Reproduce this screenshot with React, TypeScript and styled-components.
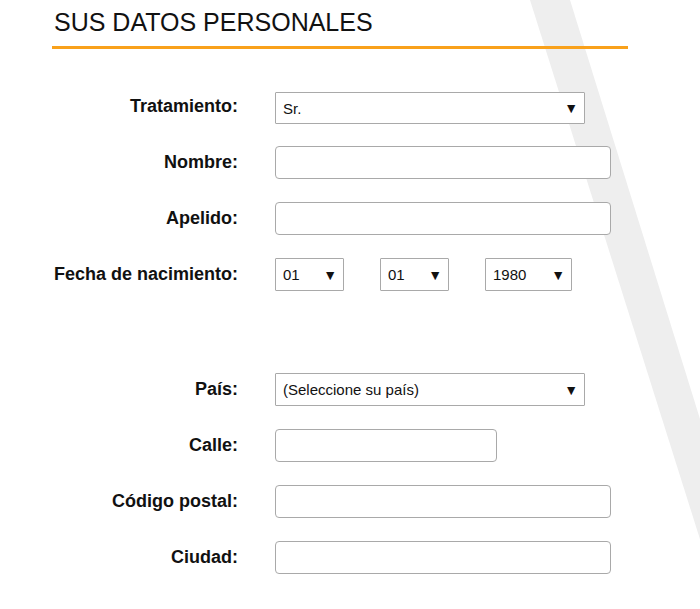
import styled, { createGlobalStyle } from "styled-components";

const GlobalStyle = createGlobalStyle`
  html, body {
    margin: 0;
    padding: 0;
    background: #ffffff;
  }
  body {
    font-family: "Liberation Sans", Arial, sans-serif;
    color: #111;
  }
`;

const SelectWrap = styled.div`
  position: relative;
  height: 33px;
`;

const SelectBox = styled.select`
  appearance: none;
  width: 100%;
  height: 100%;
  box-sizing: border-box;
  border: 1px solid #a9a9a9;
  border-radius: 1px;
  background: #fff;
  font-family: "Liberation Sans", Arial, sans-serif;
  font-size: 15px;
  color: #111;
  padding: 0 0 0 7px;
`;

const Arrow = styled.span`
  position: absolute;
  right: 7px;
  top: 50%;
  transform: translateY(-50%);
  font-size: 14px;
  line-height: 14px;
  pointer-events: none;
`;

interface SelectProps {
  value: string;
  options: string[];
  width: number;
}

const FakeSelect = (props: SelectProps) => (
  <SelectWrap style={{ width: props.width }}>
    <SelectBox defaultValue={props.value}>
      {props.options.map((o) => (
        <option key={o}>{o}</option>
      ))}
    </SelectBox>
    <Arrow>▼</Arrow>
  </SelectWrap>
);

const App = () => {
  return (
    <Page>
      <GlobalStyle />
      <Title>SUS DATOS PERSONALES</Title>
      <Form>
        <Label>Tratamiento:</Label>
        <FakeSelect value="Sr." options={["Sr.", "Sra."]} width={310} />

        <Label>Nombre:</Label>
        <TextInput $width={336} />

        <Label>Apelido:</Label>
        <TextInput $width={336} />

        <Label>Fecha de nacimiento:</Label>
        <DateRow>
          <FakeSelect value="01" options={["01"]} width={69} />
          <FakeSelect value="01" options={["01"]} width={69} />
          <FakeSelect value="1980" options={["1980"]} width={87} />
        </DateRow>

        <Spacer />

        <Label>País:</Label>
        <FakeSelect
          value="(Seleccione su país)"
          options={["(Seleccione su país)"]}
          width={310}
        />

        <Label>Calle:</Label>
        <TextInput $width={222} />

        <Label>Código postal:</Label>
        <TextInput $width={336} />

        <Label>Ciudad:</Label>
        <TextInput $width={336} />
      </Form>
    </Page>
  );
};

const Page = styled.div`
  position: relative;
  width: 700px;
  height: 609px;
  overflow: hidden;
  padding: 8px 0 0 52px;
  box-sizing: border-box;

  /* grey diagonal band behind the form */
  &::before {
    content: "";
    position: absolute;
    inset: 0;
    background: #eeeeee;
    clip-path: polygon(530px 0, 570px 0, 759px 609px, 722px 609px);
    z-index: 0;
  }
`;

const Title = styled.h1`
  position: relative;
  z-index: 1;
  width: 576px;
  margin: 0;
  padding: 0 0 9px 2px;
  box-sizing: border-box;
  font-size: 25px;
  font-weight: normal;
  line-height: 29px;
  border-bottom: 3px solid #f9a11b;
`;

const Form = styled.div`
  position: relative;
  z-index: 1;
  display: grid;
  grid-template-columns: 186px auto;
  grid-auto-rows: minmax(33px, auto);
  column-gap: 37px;
  row-gap: 23px;
  align-items: center;
  justify-items: start;
  margin-top: 41px;

  /* the first select sits a little lower and is a pixel shorter */
  & > ${SelectWrap}:first-of-type {
    align-self: start;
    margin: 2px 0 -1px;
    height: 32px;
  }
`;

const Label = styled.label`
  justify-self: end;
  font-size: 18px;
  font-weight: bold;
`;

const TextInput = styled.input<{ $width: number }>`
  width: ${(p) => p.$width}px;
  height: 33px;
  box-sizing: border-box;
  border: 1px solid #a9a9a9;
  border-radius: 4px;
  background: #fff;
  font-family: inherit;
  font-size: 15px;
  padding: 0 8px;
`;

const DateRow = styled.div`
  display: flex;
  gap: 36px;
`;

const Spacer = styled.div`
  grid-column: 1 / span 2;
  height: 36px;
`;

export default App;
